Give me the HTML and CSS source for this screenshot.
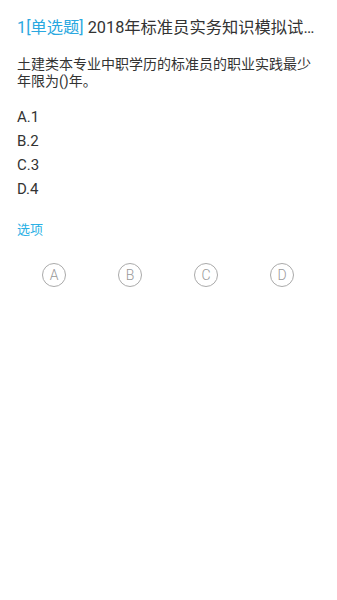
FILE: index.html
```html
<!DOCTYPE html>
<html>
<head>
    <meta charset="UTF-8">
    <meta name="viewport" content="width=device-width, initial-scale=1.0">
    <title>单选题</title>
    <link rel="stylesheet" href="styles.css">
</head>
<body>
<div class="page">
    <div class="title"><span class="type">1[单选题]</span> 2018年标准员实务知识模拟试…</div>
    <div class="question">土建类本专业中职学历的标准员的职业实践最少年限为()年。</div>
    <ul class="options">
        <li>A.1</li>
        <li>B.2</li>
        <li>C.3</li>
        <li>D.4</li>
    </ul>
    <div class="label">选项</div>
    <div class="choices">
        <div class="choice"><span class="circle">A</span></div>
        <div class="choice"><span class="circle">B</span></div>
        <div class="choice"><span class="circle">C</span></div>
        <div class="choice"><span class="circle">D</span></div>
    </div>
</div>
</body>
</html>
```

FILE: styles.css
```css
body {
    margin: 0;
    background-color: #fff;
    color: #333;
    font-family: Roboto, "Noto Sans CJK SC", sans-serif;
}
.page {
    padding: 18px 16px 0 17px;
}
.title {
    font-size: 16.3px;
    line-height: 20px;
    white-space: nowrap;
    overflow: hidden;
    color: #333;
}
.title .type {
    color: #2aa8e0;
}
.question {
    margin-top: 18px;
    font-size: 14px;
    line-height: 17px;
    padding-right: 10px;
}
.options {
    list-style: none;
    margin: 15px 0 0 0;
    padding: 0;
}
.options li {
    font-size: 15px;
    line-height: 24px;
}
.label {
    margin-top: 20px;
    font-size: 13px;
    line-height: 17px;
    color: #2ab0e4;
}
.choices {
    display: grid;
    grid-template-columns: repeat(4, 76px);
    margin-top: 25px;
    margin-left: -1px;
}
.choice {
    display: flex;
    justify-content: center;
}
.circle {
    width: 22px;
    height: 22px;
    border: 1px solid #aaa;
    border-radius: 50%;
    display: flex;
    align-items: center;
    justify-content: center;
    font-size: 14px;
    font-weight: 300;
    color: #999;
}
```
